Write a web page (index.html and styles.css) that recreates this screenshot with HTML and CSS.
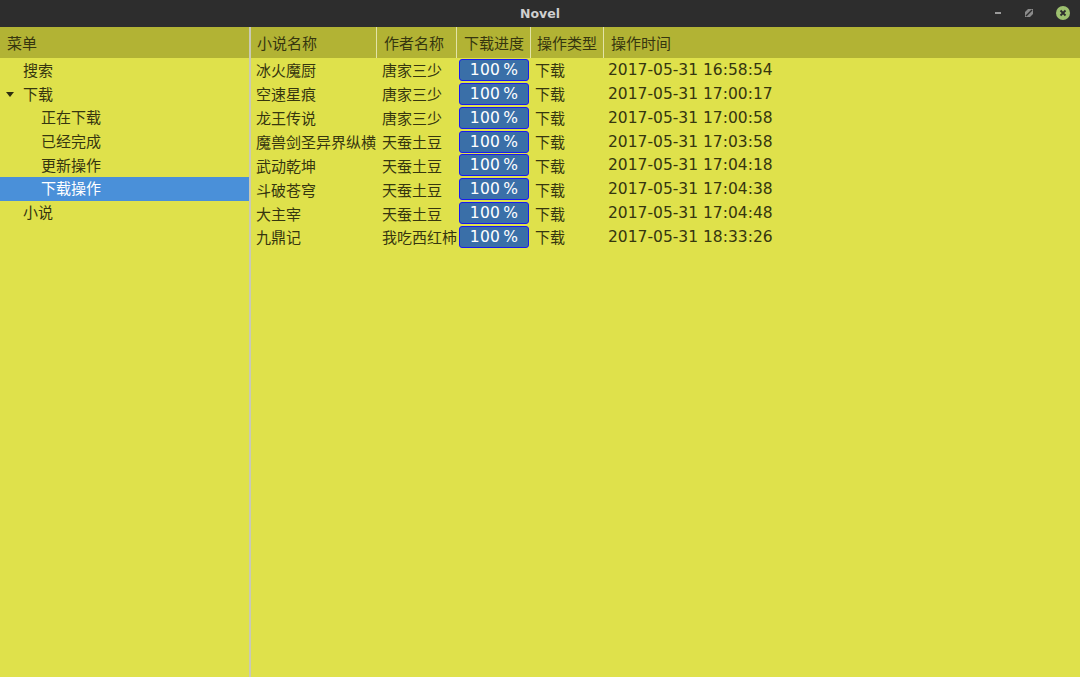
FILE: index.html
```html
<!DOCTYPE html>
<html>
<head>
<meta charset="utf-8">
<link rel="stylesheet" href="styles.css">
</head>
<body>
<div class="window">
  <div class="titlebar">
    <div class="title">Novel</div>
    <div class="controls">
      <span class="btn-min"></span>
      <svg class="btn-max" width="8" height="8" viewBox="0 0 8 8"><path d="M0 8 V3 L3 0 H8 V5 L5 8 Z" fill="#8a8a8a"/><path d="M1 7 L7 1" stroke="#2d2d2d" stroke-width="1.4"/></svg>
      <svg class="btn-close" width="14" height="14" viewBox="0 0 14 14"><circle cx="7" cy="7" r="7" fill="#9dc06f"/><path d="M4.5 4.5 L9.5 9.5 M9.5 4.5 L4.5 9.5" stroke="#2d2d2d" stroke-width="1.8"/></svg>
    </div>
  </div>
  <div class="main">
    <div class="tree">
      <div class="head tree-head">菜单</div>
      <div class="tree-body">
        <div class="node lvl1">搜索</div>
        <div class="node lvl1"><span class="arrow"></span>下载</div>
        <div class="node lvl2">正在下载</div>
        <div class="node lvl2">已经完成</div>
        <div class="node lvl2">更新操作</div>
        <div class="node lvl2 selected">下载操作</div>
        <div class="node lvl1">小说</div>
      </div>
    </div>
    <div class="splitter"></div>
    <div class="table">
      <div class="head row-head">
        <div class="c c1">小说名称</div>
        <div class="c c2">作者名称</div>
        <div class="c c3">下载进度</div>
        <div class="c c4">操作类型</div>
        <div class="c c5">操作时间</div>
      </div>
      <div class="row"><div class="c c1">冰火魔厨</div><div class="c c2">唐家三少</div><div class="c c3"><span class="bar">100<span class="pct">%</span></span></div><div class="c c4">下载</div><div class="c c5">2017-05-31 16:58:54</div></div>
      <div class="row"><div class="c c1">空速星痕</div><div class="c c2">唐家三少</div><div class="c c3"><span class="bar">100<span class="pct">%</span></span></div><div class="c c4">下载</div><div class="c c5">2017-05-31 17:00:17</div></div>
      <div class="row"><div class="c c1">龙王传说</div><div class="c c2">唐家三少</div><div class="c c3"><span class="bar">100<span class="pct">%</span></span></div><div class="c c4">下载</div><div class="c c5">2017-05-31 17:00:58</div></div>
      <div class="row"><div class="c c1">魔兽剑圣异界纵横</div><div class="c c2">天蚕土豆</div><div class="c c3"><span class="bar">100<span class="pct">%</span></span></div><div class="c c4">下载</div><div class="c c5">2017-05-31 17:03:58</div></div>
      <div class="row"><div class="c c1">武动乾坤</div><div class="c c2">天蚕土豆</div><div class="c c3"><span class="bar">100<span class="pct">%</span></span></div><div class="c c4">下载</div><div class="c c5">2017-05-31 17:04:18</div></div>
      <div class="row"><div class="c c1">斗破苍穹</div><div class="c c2">天蚕土豆</div><div class="c c3"><span class="bar">100<span class="pct">%</span></span></div><div class="c c4">下载</div><div class="c c5">2017-05-31 17:04:38</div></div>
      <div class="row"><div class="c c1">大主宰</div><div class="c c2">天蚕土豆</div><div class="c c3"><span class="bar">100<span class="pct">%</span></span></div><div class="c c4">下载</div><div class="c c5">2017-05-31 17:04:48</div></div>
      <div class="row"><div class="c c1">九鼎记</div><div class="c c2">我吃西红柿</div><div class="c c3"><span class="bar">100<span class="pct">%</span></span></div><div class="c c4">下载</div><div class="c c5">2017-05-31 18:33:26</div></div>
    </div>
  </div>
</div>
</body>
</html>
```

FILE: styles.css
```css
* { box-sizing: border-box; }
html, body { margin: 0; padding: 0; }
body {
  width: 1080px;
  height: 677px;
  overflow: hidden;
  font-family: "DejaVu Sans", "Noto Sans CJK SC", sans-serif;
  font-size: 15px;
  color: #36360f;
  background: #dfe14b;
}
.window { display: flex; flex-direction: column; height: 677px; }
.titlebar {
  height: 27px;
  background: #2d2d2d;
  display: flex;
  align-items: center;
  justify-content: center;
  position: relative;
  flex: none;
}
.title {
  font-family: "DejaVu Sans", sans-serif;
  font-weight: bold;
  font-size: 12.5px;
  color: #cfcfcf;
}
.controls {
  position: absolute;
  right: 10px;
  top: 6px;
  display: flex;
  align-items: center;
  height: 14px;
}
.btn-min { width: 6px; height: 2px; background: #9a9a9a; margin-right: 24px; }
.btn-max { margin-right: 23px; }
.btn-close { display: block; }
.main { flex: 1; display: flex; min-height: 0; }
.tree { width: 249px; flex: none; display: flex; flex-direction: column; }
.splitter { width: 2px; flex: none; background: #c9c9b6; }
.table { flex: 1; display: flex; flex-direction: column; }
.head {
  height: 31px;
  background: #b2b334;
  display: flex;
  align-items: center;
  flex: none;
}
.tree-head { padding-left: 7px; }
.tree-body { padding-top: 1px; }
.node {
  height: 23.6px;
  display: flex;
  align-items: center;
  position: relative;
  padding-bottom: 2px;
}
.lvl1 { padding-left: 23px; }
.lvl2 { padding-left: 41px; }
.selected { background: #4a90d9; color: #ffffff; }
.arrow {
  position: absolute;
  left: 6px;
  top: 9px;
  width: 0; height: 0;
  border-left: 4.5px solid transparent;
  border-right: 4.5px solid transparent;
  border-top: 5px solid #2e2e10;
}
.row-head .c { height: 31px; }
.row { display: flex; height: 23.86px; align-items: center; }
.c { display: flex; align-items: center; flex: none; height: 100%; white-space: nowrap; }
.row-head .c { padding-left: 6px; }
.row-head .c + .c { border-left: 1px solid #e3e3a8; }
.c1 { width: 125px; }
.c2 { width: 80px; }
.c3 { width: 74px; }
.c4 { width: 73px; }
.c5 { flex: 1; }
.row .c1 { padding-left: 5px; }
.row .c2 { padding-left: 6px; }
.row .c3 { padding-left: 3px; }
.row .c4 { padding-left: 5px; }
.row .c5 { padding-left: 5px; font-size: 15.5px; }
.row-head .c2 { padding-left: 7px; }
.row-head .c3 { padding-left: 7px; }
.row-head .c4 { padding-left: 6px; }
.row-head .c5 { padding-left: 7px; }
.bar {
  width: 70px;
  height: 22px;
  background: #3a6fa8;
  border: 1px solid #1a1aee;
  border-radius: 3px;
  color: #ffffff;
  display: flex;
  align-items: center;
  justify-content: center;
  font-size: 15.5px;
  letter-spacing: 0.3px;
}
.pct { margin-left: 3px; }
```
